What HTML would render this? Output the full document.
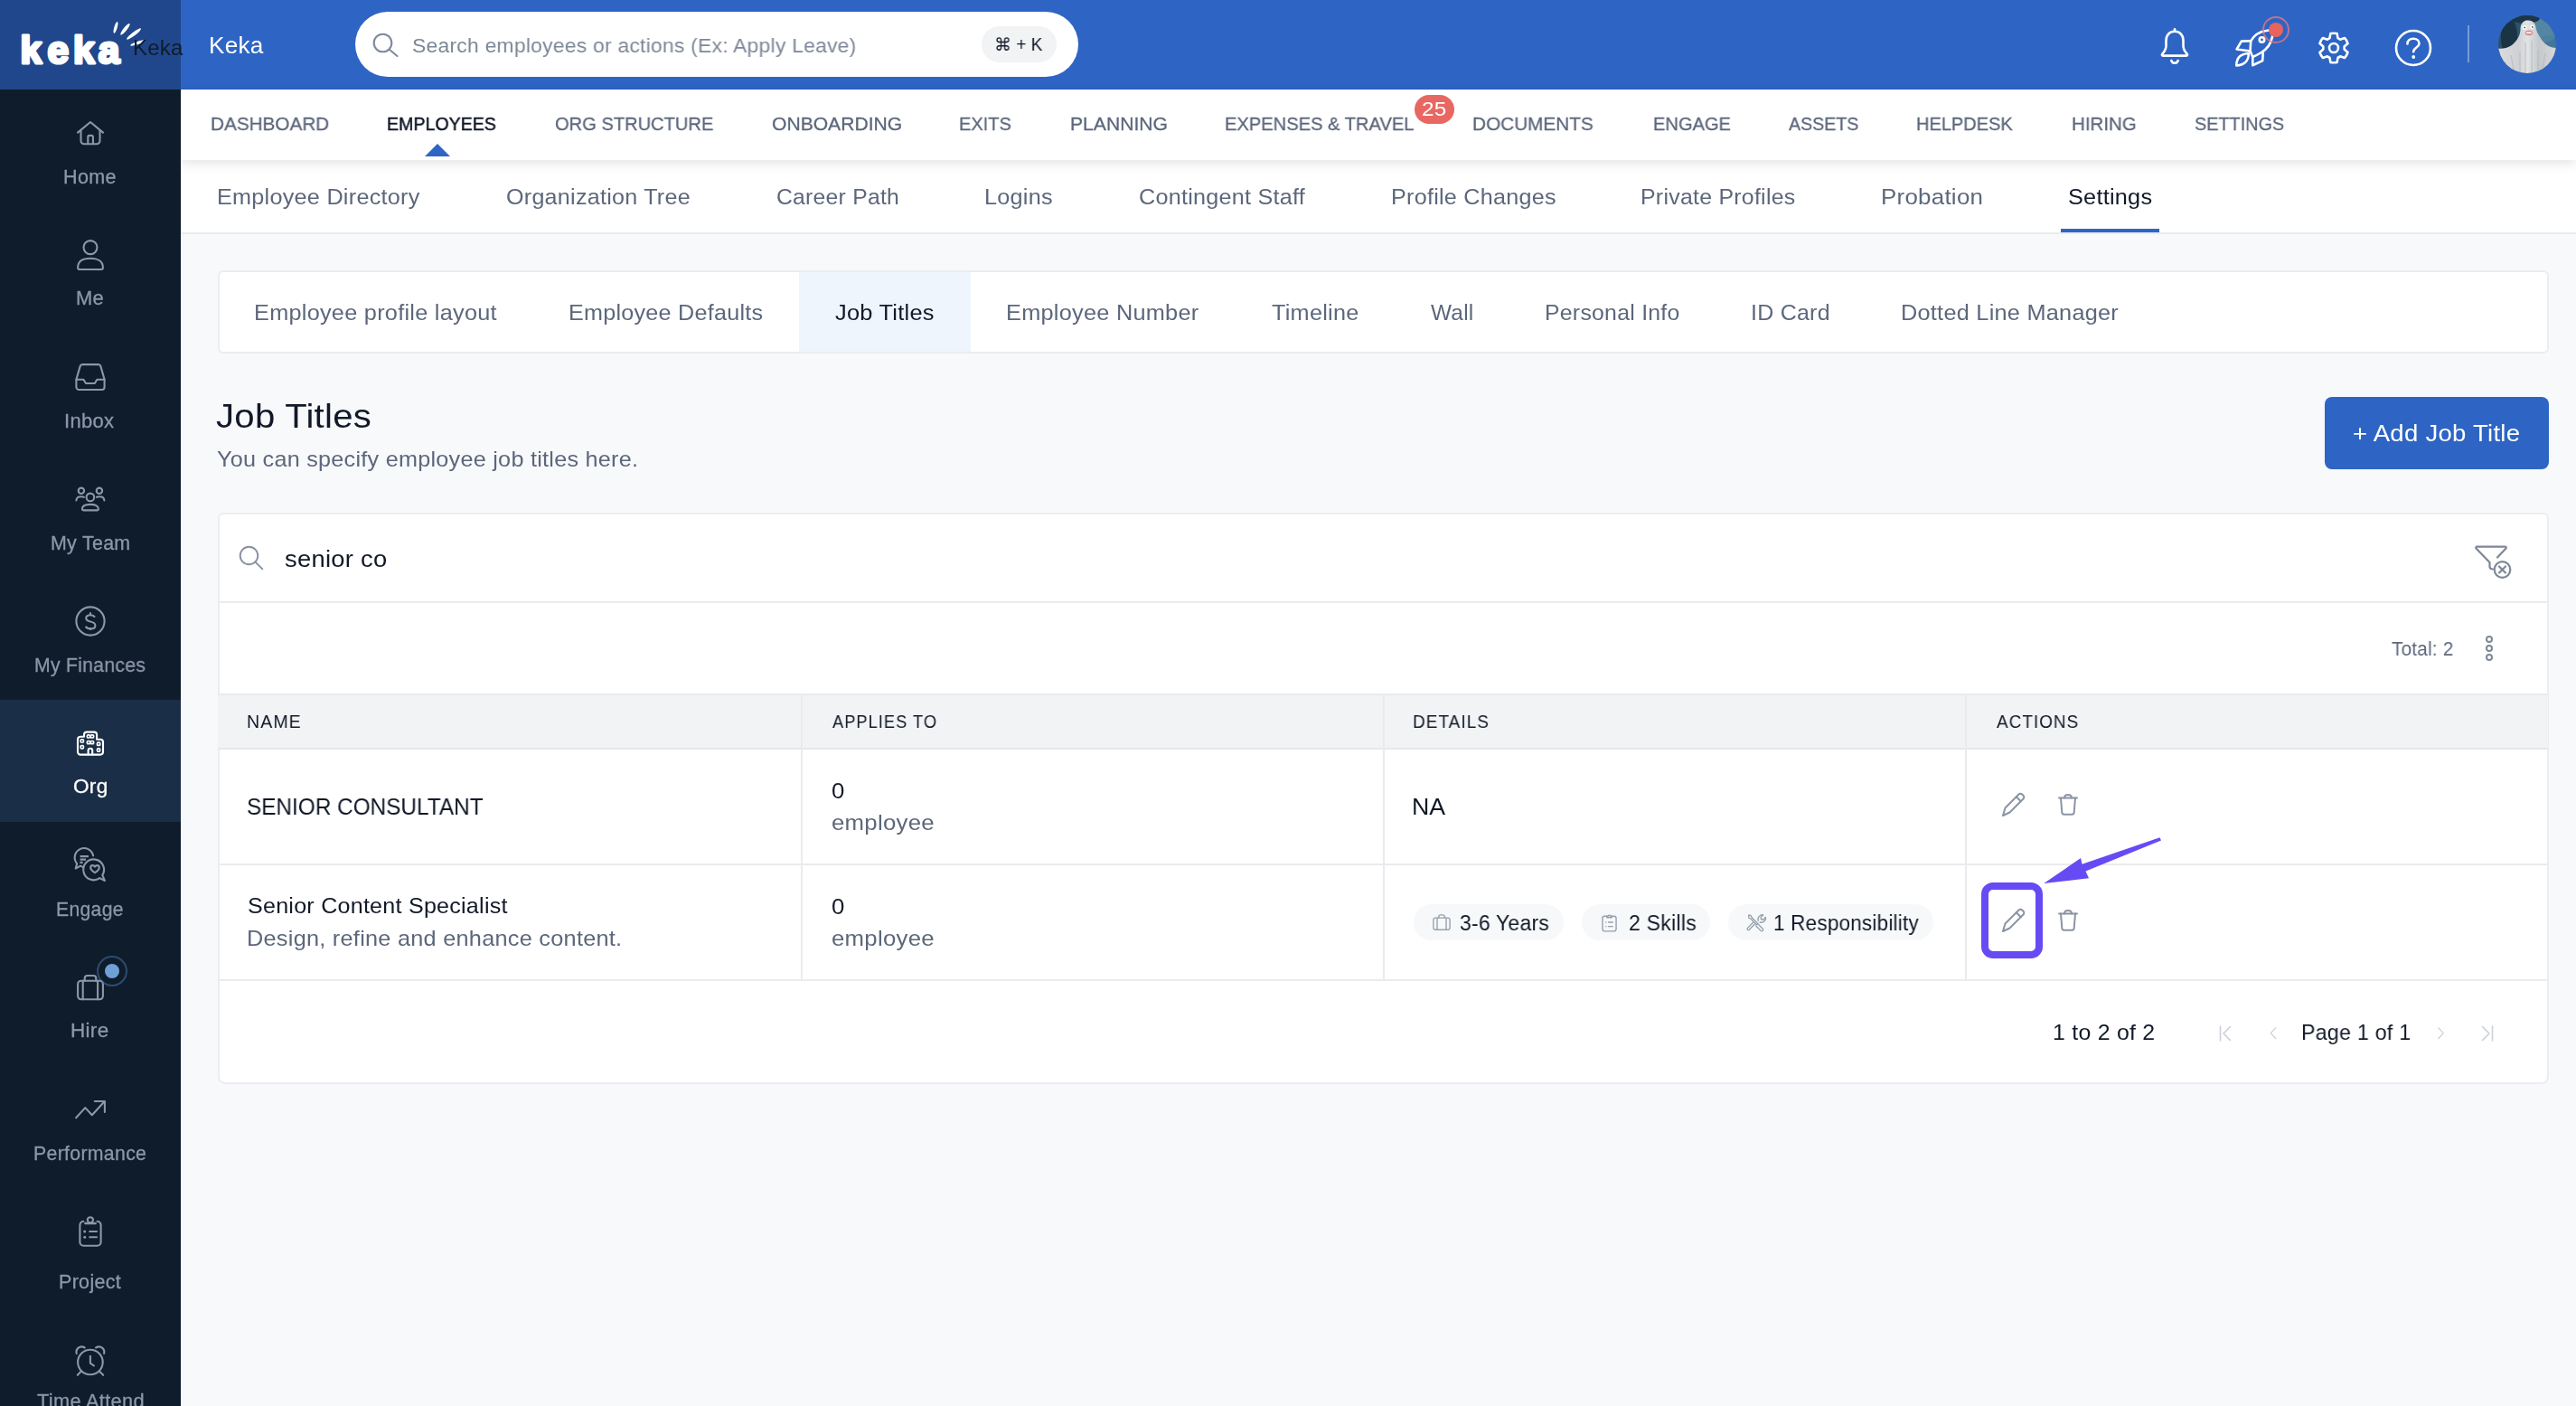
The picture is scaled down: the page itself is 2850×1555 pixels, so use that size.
<!DOCTYPE html>
<html lang="en"><head><meta charset="utf-8"><title>Keka - Job Titles</title>
<style>
*{box-sizing:border-box;margin:0;padding:0}
html,body{width:2850px;height:1555px;overflow:hidden}
body{position:relative;background:#f8f9fb;font-family:"Liberation Sans","DejaVu Sans",sans-serif;color:#111827;-webkit-font-smoothing:antialiased}
.t{will-change:transform;position:absolute;white-space:nowrap;line-height:1;display:block;transform-origin:0 50%}
a{text-decoration:none;color:inherit}
.abs{position:absolute}
svg{position:absolute;overflow:visible}
.sidebar{position:absolute;left:0;top:0;width:200px;height:1555px;background:#0f1c2b;z-index:3}
.logo{position:absolute;left:0;top:0;width:200px;height:99px;background:#20478b}
.side-item{position:absolute;left:0;width:200px;height:135px}
.side-item.active{background:#1a2e47}
.topbar{position:absolute;left:200px;top:0;width:2650px;height:99px;background:#2e65c4;border-bottom:1px solid #235fc4}
.search{position:absolute;left:193px;top:13px;width:800px;height:72px;border-radius:36px;background:#fff}
.kbd{position:absolute;left:693px;top:16px;width:83px;height:40px;border-radius:20px;background:#f2f3f5}
.mainnav{position:absolute;left:200px;top:99px;width:2650px;height:78px;background:#fff;box-shadow:0 3px 12px rgba(20,30,50,.13);z-index:2}
.subnav{position:absolute;left:200px;top:177px;width:2650px;height:82px;background:#fff;border-bottom:2px solid #e9ebee}
.card{position:absolute;background:#fff;border:2px solid #ebedf0;border-radius:6px}
.badge{position:absolute;border-radius:16px;background:#e86762}
.btn{position:absolute;left:2572px;top:439px;width:248px;height:80px;border-radius:8px;background:#2e65c4;border:0}
.thead{position:absolute;left:241px;top:767px;width:2578px;height:62px;background:#f2f3f5;border-top:2px solid #e9ebee;border-bottom:2px solid #e6e8ec}
.chip{position:absolute;height:40px;border-radius:20px;background:#f7f8fa}
.vline{position:absolute;width:2px;background:#e9ebee}
.hline{position:absolute;height:2px;background:#e9ebee}
.hl{position:absolute;left:2192px;top:976px;width:68px;height:84px;border:8px solid #664bf5;border-radius:13px}
</style></head><body>

<aside class="sidebar">
<div class="logo">
<svg width="200" height="99" viewBox="0 0 200 99" style="left:0;top:0"><text x="22.600" y="69.500" dx="0 6.200 4.900 4.200" font-family="Liberation Sans, sans-serif" font-weight="700" font-size="42.500" fill="#fff" stroke="#fff" stroke-width="3.200" stroke-linejoin="round">keka</text><g fill="#fff"><ellipse cx="128" cy="30.400" rx="6.600" ry="1.700" transform="rotate(-73.300 128 30.400)"/><ellipse cx="138.500" cy="32.300" rx="8" ry="1.900" transform="rotate(-51.300 138.500 32.300)"/><ellipse cx="148.100" cy="37.500" rx="9.800" ry="2" transform="rotate(-37.200 148.100 37.500)"/><ellipse cx="152.200" cy="47.500" rx="8.500" ry="1.700" transform="rotate(-19 152.200 47.500)"/></g></svg>
<span id="t1" class="t" style="left:147.0px;top:41.2px;font-size:24px;color:#0f1c2b;letter-spacing:0.25px;">Keka</span>
</div>
<a class="side-item" style="top:99px;color:#8d97a8">
<span class="abs" style="left:0;top:48.0px;width:200px;height:0"><svg width="32" height="28" viewBox="0 0 32 28" style="left:84px;top:-14px"><g stroke="currentColor" stroke-width="2.1" fill="none" stroke-linecap="round" stroke-linejoin="round"><path d="M2 13.600 L16 2 L30 13.600"/><path d="M5.500 11 V22.700 a3.500 3.500 0 0 0 3.500 3.500 H23 a3.500 3.500 0 0 0 3.500-3.500 V11"/><path d="M13.300 26.200 V18.400 a1.500 1.500 0 0 1 1.500-1.500 h2.600 a1.500 1.500 0 0 1 1.500 1.500 V26.200"/></g></svg></span>
<span id="t2" class="t" style="left:70.0px;top:85.5px;font-size:21.2px;color:#8d97a8;letter-spacing:0.30px;transform:scaleX(1.0179);-webkit-text-stroke:.3px #8d97a8;">Home</span>
</a>
<a class="side-item" style="top:234px;color:#8d97a8">
<span class="abs" style="left:0;top:48.0px;width:200px;height:0"><svg width="32" height="36" viewBox="0 0 32 36" style="left:84px;top:-18px"><g stroke="currentColor" stroke-width="2.1" fill="none" stroke-linecap="round" stroke-linejoin="round" stroke-width="2.3"><circle cx="16" cy="9.600" r="7.500"/><path d="M2.100 32 c0-6.500 5-10.300 13.900-10.300 s13.900 3.800 13.900 10.300 a2 2 0 0 1-2 2 H4.100 a2 2 0 0 1-2-2 z"/></g></svg></span>
<span id="t3" class="t" style="left:84.0px;top:85.1px;font-size:21.2px;color:#8d97a8;letter-spacing:0.30px;transform:scaleX(1.0357);-webkit-text-stroke:.3px #8d97a8;">Me</span>
</a>
<a class="side-item" style="top:369px;color:#8d97a8">
<span class="abs" style="left:0;top:47.0px;width:200px;height:0"><svg width="36" height="32" viewBox="0 0 36 32" style="left:82px;top:-15px"><g stroke="currentColor" stroke-width="2.1" fill="none" stroke-linecap="round" stroke-linejoin="round" stroke-width="2.2"><path d="M2.400 18.800 L6.700 3.900 a2.500 2.500 0 0 1 2.400-1.800 H26.900 a2.500 2.500 0 0 1 2.400 1.800 L33.600 18.800 V27 a3 3 0 0 1-3 3 H5.400 a3 3 0 0 1-3-3 z"/><path d="M2.400 18.800 H10.400 L13 23 H22.800 L25.400 18.800 H33.600"/></g></svg></span>
<span id="t4" class="t" style="left:71.0px;top:85.7px;font-size:21.2px;color:#8d97a8;letter-spacing:0.30px;transform:scaleX(1.0392);-webkit-text-stroke:.3px #8d97a8;">Inbox</span>
</a>
<a class="side-item" style="top:504px;color:#8d97a8">
<span class="abs" style="left:0;top:47.6px;width:200px;height:0"><svg width="36" height="28" viewBox="0 0 36 28" style="left:82px;top:-13.600px"><g stroke="currentColor" stroke-width="2.1" fill="none" stroke-linecap="round" stroke-linejoin="round" stroke-width="2"><circle cx="17.900" cy="11.900" r="4.300"/><path d="M8.900 25 c0-3.200 3.500-5.100 9-5.100 s9 1.900 9 5.100 a1.400 1.400 0 0 1-1.400 1.400 H10.300 a1.400 1.400 0 0 1-1.400-1.400 z"/><circle cx="7.900" cy="4.800" r="3.200"/><path d="M2.400 15.500 c.2-2.800 2.300-4.300 5.200-4.300 c1.200 0 2.300 .2 3.200 .6"/><circle cx="27.900" cy="4.800" r="3.200"/><path d="M33.400 15.500 c-.2-2.800-2.300-4.300-5.200-4.300 c-1.200 0-2.300 .2-3.200 .6"/></g></svg></span>
<span id="t5" class="t" style="left:56.0px;top:85.6px;font-size:21.2px;color:#8d97a8;letter-spacing:0.30px;transform:scaleX(1.0094);-webkit-text-stroke:.3px #8d97a8;">My Team</span>
</a>
<a class="side-item" style="top:639px;color:#8d97a8">
<span class="abs" style="left:0;top:47.5px;width:200px;height:0"><svg width="34" height="34" viewBox="0 0 34 34" style="left:83px;top:-16.600px"><g stroke="currentColor" stroke-width="2.1" fill="none" stroke-linecap="round" stroke-linejoin="round" stroke-width="2"><circle cx="17" cy="17" r="15.600"/><path d="M22 12.600 c-1-1.600-2.800-2.400-5-2.400 c-2.800 0-4.800 1.400-4.800 3.600 c0 2.200 1.800 3 4.900 3.700 c3.300 .8 5.300 1.700 5.300 4.200 c0 2.400-2.200 3.800-5.200 3.800 c-2.500 0-4.500-.9-5.500-2.700 M17 7.300 V10 M17 24 V26.900" stroke-linecap="butt"/></g></svg></span>
<span id="t6" class="t" style="left:38.0px;top:86.0px;font-size:21.2px;color:#8d97a8;letter-spacing:0.30px;transform:scaleX(0.9980);-webkit-text-stroke:.3px #8d97a8;">My Finances</span>
</a>
<a class="side-item active" style="top:774px;color:#fff">
<span class="abs" style="left:0;top:47.8px;width:200px;height:0"><svg width="32" height="28" viewBox="0 0 32 28" style="left:84px;top:-14px"><g stroke="currentColor" stroke-width="2.1" fill="none" stroke-linecap="round" stroke-linejoin="round" stroke-width="2"><path d="M2 23.600 V9.700 a3 3 0 0 1 3-3 H9 V4.600 a3 3 0 0 1 3-3 H20.100 a3 3 0 0 1 3 3 V9.700 H27 a3 3 0 0 1 3 3 V23.600 a3 3 0 0 1-3 3 H5 a3 3 0 0 1-3-3 z"/><path d="M13.600 26.600 V22 a2.300 2.300 0 0 1 4.600 0 V26.600"/><g stroke-width="1.700"><rect x="12.400" y="4.800" width="3.200" height="3.200" rx="1"/><rect x="16.400" y="4.800" width="3.200" height="3.200" rx="1"/><rect x="12.400" y="11.500" width="3.200" height="3.200" rx="1"/><rect x="16.400" y="11.500" width="3.200" height="3.200" rx="1"/><rect x="5.200" y="9.800" width="3.200" height="3.200" rx="1"/><rect x="5.200" y="16.600" width="3.200" height="3.200" rx="1"/><rect x="23.500" y="13.200" width="3.200" height="3.200" rx="1"/><rect x="23.500" y="19.900" width="3.200" height="3.200" rx="1"/></g></g></svg></span>
<span id="t7" class="t" style="left:81.0px;top:85.4px;font-size:21.2px;color:#fff;letter-spacing:0.30px;transform:scaleX(1.0652);-webkit-text-stroke:.3px #fff;">Org</span>
</a>
<a class="side-item" style="top:909px;color:#8d97a8">
<span class="abs" style="left:0;top:47.8px;width:200px;height:0"><svg width="36" height="36" viewBox="0 0 36 36" style="left:82px;top:-18px"><g stroke="currentColor" stroke-width="2.1" fill="none" stroke-linecap="round" stroke-linejoin="round" stroke-width="1.900"><path d="M21.100 7.400 A10.300 10.300 0 1 0 3.200 16.100 L1.700 21.600 L7 18.600 L9.600 19.900"/><path d="M6.600 8.200 H16 M6.600 11.600 H13 M6.400 14.800 H9.600" stroke-width="2.200" stroke-linecap="butt"/><path d="M31.300 28.900 L33.900 35 L28.300 32.100 A11.400 11.400 0 1 1 31.300 28.900 z"/><path d="M23 26.200 c-3.200-2-4.800-3.800-4.800-5.700 c0-1.400 1.100-2.400 2.400-2.400 c1 0 1.900 .6 2.400 1.500 c.5-.9 1.400-1.500 2.400-1.500 c1.300 0 2.400 1 2.400 2.400 c0 1.900-1.600 3.700-4.800 5.700 z"/></g></svg></span>
<span id="t8" class="t" style="left:62.0px;top:85.8px;font-size:21.2px;color:#8d97a8;letter-spacing:0.30px;transform:scaleX(0.9989);-webkit-text-stroke:.3px #8d97a8;">Engage</span>
</a>
<a class="side-item" style="top:1044px;color:#8d97a8">
<span class="abs" style="left:0;top:47.0px;width:200px;height:0"><svg width="32" height="30" viewBox="0 0 32 30" style="left:84px;top:-13px"><g stroke="currentColor" stroke-width="2.1" fill="none" stroke-linecap="round" stroke-linejoin="round" stroke-width="2.200"><rect x="2.100" y="6.800" width="27.800" height="20.400" rx="3.600"/><path d="M9.700 6.800 V4 a3 3 0 0 1 3-3 h6.600 a3 3 0 0 1 3 3 V6.800"/><path d="M7.700 6.800 V27.200 M24.100 6.800 V27.200"/></g></svg></span>
<span id="t9" class="t" style="left:78.0px;top:84.9px;font-size:21.2px;color:#8d97a8;letter-spacing:0.30px;transform:scaleX(1.0613);-webkit-text-stroke:.3px #8d97a8;">Hire</span>
<span class="abs" style="left:106.700px;top:12.7px;width:34.600px;height:34.600px;border-radius:50%;border:2.200px solid rgba(78,124,180,.5)"></span>
<span class="abs" style="left:115.900px;top:21.9px;width:16.200px;height:16.200px;border-radius:50%;background:#6ea0d6"></span>
</a>
<a class="side-item" style="top:1179px;color:#8d97a8">
<span class="abs" style="left:0;top:47.0px;width:200px;height:0"><svg width="36" height="24" viewBox="0 0 36 24" style="left:82px;top:-11px"><g stroke="currentColor" stroke-width="2.1" fill="none" stroke-linecap="round" stroke-linejoin="round" stroke-width="2.200" stroke-linecap="butt" stroke-linejoin="miter"><path d="M2.100 21.200 L12.300 10.100 L19.800 18.200 L33.600 3.300"/><path d="M22.800 3 H33.900 V15"/></g></svg></span>
<span id="t10" class="t" style="left:37.0px;top:85.9px;font-size:21.2px;color:#8d97a8;letter-spacing:0.30px;transform:scaleX(1.0051);-webkit-text-stroke:.3px #8d97a8;">Performance</span>
</a>
<a class="side-item" style="top:1320px;color:#8d97a8">
<span class="abs" style="left:0;top:42.0px;width:200px;height:0"><svg width="28" height="36" viewBox="0 0 28 36" style="left:86px;top:-18px"><g stroke="currentColor" stroke-width="2.1" fill="none" stroke-linecap="round" stroke-linejoin="round" stroke-width="2.200"><path d="M6.400 6.800 A4.500 4.500 0 0 0 2.400 11.200 V29.700 a4 4 0 0 0 4 4 H21.600 a4 4 0 0 0 4-4 V11.200 A4.500 4.500 0 0 0 21.600 6.800"/><circle cx="13.900" cy="5.300" r="3.100"/><path d="M8.300 9 H19.700" stroke-width="2.400"/><path d="M12.400 18 H21.800 M12.400 24.300 H21.800" stroke-linecap="butt"/></g><circle cx="7.700" cy="18" r="1.500" fill="currentColor"/><circle cx="7.700" cy="24.300" r="1.500" fill="currentColor"/></svg></span>
<span id="t11" class="t" style="left:65.0px;top:87.4px;font-size:21.2px;color:#8d97a8;letter-spacing:0.30px;transform:scaleX(1.0149);-webkit-text-stroke:.3px #8d97a8;">Project</span>
</a>
<a class="side-item" style="top:1459px;color:#8d97a8">
<span class="abs" style="left:0;top:45.4px;width:200px;height:0"><svg width="36" height="36" viewBox="0 0 36 36" style="left:82px;top:-18px"><g stroke="currentColor" stroke-width="2.1" fill="none" stroke-linecap="round" stroke-linejoin="round" stroke-width="2"><circle cx="17.900" cy="20.500" r="13.800"/><path d="M17.900 13 V21.600 L22.600 25" stroke-linecap="butt"/><path d="M2.700 11.100 C1.400 6.100 6.500 1.100 11.700 4.500"/><path d="M33.100 11.100 C34.400 6.100 29.300 1.100 24.100 4.500"/><path d="M7.900 30.500 L3.800 34.800 M27.900 30.500 L32.200 34.800"/></g></svg></span>
<span id="t12" class="t" style="left:41.0px;top:79.7px;font-size:21.2px;color:#8d97a8;letter-spacing:0.30px;transform:scaleX(1.0281);-webkit-text-stroke:.3px #8d97a8;">Time Attend</span>
</a>
</aside>
<header class="topbar">
<span id="t13" class="t" style="left:31.0px;top:36.6px;font-size:26px;color:#fff;letter-spacing:0.25px;transform:scaleX(1.0039);">Keka</span>
<div class="search">
<svg width="30" height="28" viewBox="0 0 30 28" style="left:19px;top:23px"><g stroke="#7f8a9a" stroke-width="2.100" fill="none" stroke-linecap="round"><circle cx="11.500" cy="11.500" r="9.800"/><path d="M18.800 18.800 L27.500 26"/></g></svg>
<span id="t14" class="t" style="left:63.0px;top:26.0px;font-size:22.9px;color:#7c8797;letter-spacing:0.25px;transform:scaleX(0.9986);">Search employees or actions (Ex: Apply Leave)</span>
<div class="kbd">
<span id="t15" class="t" style="left:14.0px;top:10.8px;font-size:19.5px;color:#111827;transform:scaleX(0.9735);">⌘ + K</span>
</div></div>
<svg width="36" height="44" viewBox="0 0 36 44" style="left:2188px;top:29px"><g stroke="#fff" stroke-width="2.600" fill="none" stroke-linecap="round" stroke-linejoin="round"><path d="M18 5.800 c-5.800 0-9.500 4.300-9.500 10 v5.800 c0 3.800-1.800 6.600-4.300 9.300 c-.6.700-.2 1.700 .8 1.700 H31 c1 0 1.400-1 .8-1.700 c-2.500-2.700-4.300-5.500-4.300-9.300 v-5.800 c0-5.700-3.700-10-9.500-10 z"/><path d="M14.300 38 c.7 1.900 2 2.800 3.700 2.800 s3-.9 3.700-2.800"/><path d="M18 3.300 V5"/></g></svg>
<svg width="46" height="46" viewBox="0 0 46 46" style="left:2271px;top:30px"><g stroke="#fff" stroke-width="2.600" fill="none" stroke-linecap="round" stroke-linejoin="round"><path d="M19.200 15.300 C23 9 29.500 4.900 36 4 c2.800-.6 5.400-.8 7.700-.7 c.1 2.300-.1 5-.8 7.800 C41.500 17.500 37.500 24 31 28 c-3 1.800-6.300 3.500-9.700 5 L18.600 26.500 z"/><circle cx="31.500" cy="14" r="2.700"/><path d="M19.200 15.300 L8.800 15.600 L3.600 24.500 L18.600 26.500"/><path d="M21.300 33 L21.300 42.200 L32.200 37.100 L32.800 27"/><path d="M3.300 42.500 C3.300 36 6 29.500 16.800 29 C17 38 11 42 3.300 42.500 z"/></g></svg>
<span class="abs" style="left:2303px;top:18px;width:30px;height:30px;border-radius:50%;border:2px solid rgba(232,120,130,.75)"></span>
<span class="abs" style="left:2310px;top:25px;width:16px;height:16px;border-radius:50%;background:#e8635f"></span>
<svg width="38" height="38" viewBox="0 0 38 38" style="left:2363px;top:33.800px"><g stroke="#fff" stroke-width="2.600" fill="none" stroke-linecap="round" stroke-linejoin="round"><circle cx="19" cy="19" r="5"/><path d="M14.43 8.23 L15.47 3.09 A16.3 16.3 0 0 1 22.53 3.09 L23.57 8.23 A11.7 11.7 0 0 1 26.04 9.66 L31.02 7.99 A16.3 16.3 0 0 1 34.55 14.10 L30.61 17.57 A11.7 11.7 0 0 1 30.61 20.43 L34.55 23.90 A16.3 16.3 0 0 1 31.02 30.01 L26.04 28.34 A11.7 11.7 0 0 1 23.57 29.77 L22.53 34.91 A16.3 16.3 0 0 1 15.47 34.91 L14.43 29.77 A11.7 11.7 0 0 1 11.96 28.34 L6.98 30.01 A16.3 16.3 0 0 1 3.45 23.90 L7.39 20.43 A11.7 11.7 0 0 1 7.39 17.57 L3.45 14.10 A16.3 16.3 0 0 1 6.98 7.99 L11.96 9.66 A11.7 11.7 0 0 1 14.43 8.23 z"/></g></svg>
<svg width="42" height="42" viewBox="0 0 42 42" style="left:2449px;top:32px"><g stroke="#fff" stroke-width="2.600" fill="none" stroke-linecap="round" stroke-linejoin="round"><circle cx="21" cy="21" r="19"/><path d="M14.500 16.500 c0-3.500 2.800-5.800 6.500-5.800 s6.500 2.200 6.500 5.500 c0 4.300-6.300 4.300-6.300 9"/></g><circle cx="21.200" cy="31" r="1.900" fill="#fff"/></svg>
<span class="abs" style="left:2530px;top:28px;width:2px;height:41px;background:rgba(255,255,255,.35)"></span>
<svg width="64" height="64" viewBox="0 0 64 64" style="left:2564px;top:17px"><defs><clipPath id="avc"><circle cx="32" cy="32" r="32"/></clipPath><linearGradient id="avg" x1="0" y1="0" x2="1" y2="0"><stop offset="0" stop-color="#d9dbdd"/><stop offset=".35" stop-color="#cfd1d4"/><stop offset=".5" stop-color="#e1e3e5"/><stop offset=".7" stop-color="#c6c9cc"/><stop offset="1" stop-color="#d6d8da"/></linearGradient></defs><g clip-path="url(#avc)"><rect width="64" height="64" fill="#2b516b"/><ellipse cx="50" cy="16" rx="16" ry="14" fill="#5f93b3" opacity=".8"/><ellipse cx="56" cy="30" rx="10" ry="8" fill="#4b7fa0" opacity=".8"/><ellipse cx="12" cy="24" rx="9" ry="22" fill="#1a3444"/><ellipse cx="30" cy="3" rx="16" ry="6" fill="#1c3646"/><path d="M33 5.500 C27 5.500 24.500 10 24.500 15 C24.500 22 21 28 15 33 C9 37 3 37 0 36.500 V64 H64 V35.800 C58 36 52 33 48 27 C44 21 42 17 41.500 13 C41 8.500 38 5.500 33 5.500 z" fill="url(#avg)"/><path d="M24 40 V64 M30 30 V64 M37 28 V64 M44 38 V64 M14 44 L18 64 M52 42 L48 64" stroke="#b4b7bb" stroke-width="1.200" opacity=".7" fill="none"/><circle cx="28.900" cy="13.400" r="2.300" fill="#fff"/><circle cx="37.500" cy="12.700" r="2.300" fill="#fff"/><circle cx="29.200" cy="13.600" r=".8" fill="#222"/><circle cx="37.800" cy="12.900" r=".8" fill="#222"/><ellipse cx="33.900" cy="19.400" rx="4.200" ry="2.800" fill="#d98c8c"/><rect x="31" y="18.400" width="5.800" height="1.600" rx=".6" fill="#fff"/></g></svg>
</header>
<nav class="mainnav">
<a id="t16" class="t" style="left:33.0px;top:26.5px;font-size:21px;color:#5c677b;transform:scaleX(0.9864);-webkit-text-stroke:.3px #5c677b;">DASHBOARD</a>
<a id="t17" class="t" style="left:228.0px;top:26.5px;font-size:21px;color:#111827;transform:scaleX(0.9330);-webkit-text-stroke:.5px #111827;">EMPLOYEES</a>
<a id="t18" class="t" style="left:414.0px;top:26.5px;font-size:21px;color:#5c677b;transform:scaleX(0.9571);-webkit-text-stroke:.3px #5c677b;">ORG STRUCTURE</a>
<a id="t19" class="t" style="left:654.0px;top:26.5px;font-size:21px;color:#5c677b;transform:scaleX(1.0042);-webkit-text-stroke:.3px #5c677b;">ONBOARDING</a>
<a id="t20" class="t" style="left:861.0px;top:26.5px;font-size:21px;color:#5c677b;transform:scaleX(0.9528);-webkit-text-stroke:.3px #5c677b;">EXITS</a>
<a id="t21" class="t" style="left:984.0px;top:26.5px;font-size:21px;color:#5c677b;transform:scaleX(1.0052);-webkit-text-stroke:.3px #5c677b;">PLANNING</a>
<a id="t22" class="t" style="left:1155.0px;top:26.5px;font-size:21px;color:#5c677b;transform:scaleX(0.9580);-webkit-text-stroke:.3px #5c677b;">EXPENSES &amp; TRAVEL</a>
<a id="t23" class="t" style="left:1429.0px;top:26.5px;font-size:21px;color:#5c677b;transform:scaleX(0.9888);-webkit-text-stroke:.3px #5c677b;">DOCUMENTS</a>
<a id="t24" class="t" style="left:1629.0px;top:26.5px;font-size:21px;color:#5c677b;transform:scaleX(0.9567);-webkit-text-stroke:.3px #5c677b;">ENGAGE</a>
<a id="t25" class="t" style="left:1779.0px;top:26.5px;font-size:21px;color:#5c677b;transform:scaleX(0.9343);-webkit-text-stroke:.3px #5c677b;">ASSETS</a>
<a id="t26" class="t" style="left:1920.0px;top:26.5px;font-size:21px;color:#5c677b;transform:scaleX(0.9531);-webkit-text-stroke:.3px #5c677b;">HELPDESK</a>
<a id="t27" class="t" style="left:2092.0px;top:26.5px;font-size:21px;color:#5c677b;transform:scaleX(0.9748);-webkit-text-stroke:.3px #5c677b;">HIRING</a>
<a id="t28" class="t" style="left:2228.0px;top:26.5px;font-size:21px;color:#5c677b;transform:scaleX(0.9440);-webkit-text-stroke:.3px #5c677b;">SETTINGS</a>
<svg width="28" height="14" viewBox="0 0 28 14" style="left:270px;top:60px"><path d="M0 14 L14 0 L28 14 z" fill="#2e65c4"/></svg>
<span class="badge" style="left:1365px;top:6px;width:44px;height:32px"></span>
<span id="t29" class="t" style="left:1373.0px;top:11.9px;font-size:21.5px;color:#fff;letter-spacing:0.25px;transform:scaleX(1.1289);">25</span>
</nav>
<nav class="subnav">
<a id="t30" class="t" style="left:40.0px;top:28.6px;font-size:24.2px;color:#5c677b;letter-spacing:0.25px;transform:scaleX(1.0419);">Employee Directory</a>
<a id="t31" class="t" style="left:360.0px;top:28.6px;font-size:24.2px;color:#5c677b;letter-spacing:0.25px;transform:scaleX(1.0375);">Organization Tree</a>
<a id="t32" class="t" style="left:659.0px;top:28.6px;font-size:24.2px;color:#5c677b;letter-spacing:0.25px;transform:scaleX(1.0214);">Career Path</a>
<a id="t33" class="t" style="left:889.0px;top:28.6px;font-size:24.2px;color:#5c677b;letter-spacing:0.25px;transform:scaleX(1.0425);">Logins</a>
<a id="t34" class="t" style="left:1060.0px;top:28.6px;font-size:24.2px;color:#5c677b;letter-spacing:0.25px;transform:scaleX(1.0398);">Contingent Staff</a>
<a id="t35" class="t" style="left:1339.0px;top:28.6px;font-size:24.2px;color:#5c677b;letter-spacing:0.25px;transform:scaleX(1.0392);">Profile Changes</a>
<a id="t36" class="t" style="left:1615.0px;top:28.6px;font-size:24.2px;color:#5c677b;letter-spacing:0.25px;transform:scaleX(1.0291);">Private Profiles</a>
<a id="t37" class="t" style="left:1881.0px;top:28.6px;font-size:24.2px;color:#5c677b;letter-spacing:0.25px;transform:scaleX(1.0702);">Probation</a>
<a id="t38" class="t" style="left:2088.0px;top:28.6px;font-size:24.2px;color:#111827;letter-spacing:0.25px;transform:scaleX(1.0436);">Settings</a>
<span class="abs" style="left:2080px;top:76px;width:109px;height:4px;background:#2e65c4"></span>
</nav>
<main>
<div class="card" style="left:241px;top:299px;width:2579px;height:92px">
<span class="abs" style="left:641px;top:0;width:190px;height:88px;background:#eef5fd"></span>
<a id="t39" class="t" style="left:38.0px;top:33.0px;font-size:24.2px;color:#5c677b;letter-spacing:0.25px;transform:scaleX(1.0453);">Employee profile layout</a>
<a id="t40" class="t" style="left:386.0px;top:33.0px;font-size:24.2px;color:#5c677b;letter-spacing:0.25px;transform:scaleX(1.0389);">Employee Defaults</a>
<a id="t41" class="t" style="left:681.0px;top:33.0px;font-size:24.2px;color:#111827;letter-spacing:0.25px;transform:scaleX(1.0484);">Job Titles</a>
<a id="t42" class="t" style="left:870.0px;top:33.0px;font-size:24.2px;color:#5c677b;letter-spacing:0.25px;transform:scaleX(1.0462);">Employee Number</a>
<a id="t43" class="t" style="left:1164.0px;top:33.0px;font-size:24.2px;color:#5c677b;letter-spacing:0.25px;transform:scaleX(1.0436);">Timeline</a>
<a id="t44" class="t" style="left:1340.0px;top:33.0px;font-size:24.2px;color:#5c677b;letter-spacing:0.25px;transform:scaleX(1.0071);">Wall</a>
<a id="t45" class="t" style="left:1466.0px;top:33.0px;font-size:24.2px;color:#5c677b;letter-spacing:0.25px;transform:scaleX(1.0259);">Personal Info</a>
<a id="t46" class="t" style="left:1694.0px;top:33.0px;font-size:24.2px;color:#5c677b;letter-spacing:0.25px;transform:scaleX(1.0320);">ID Card</a>
<a id="t47" class="t" style="left:1860.0px;top:33.0px;font-size:24.2px;color:#5c677b;letter-spacing:0.25px;transform:scaleX(1.0451);">Dotted Line Manager</a>
</div>
<h1 id="t48" class="t" style="left:239.0px;top:441.9px;font-size:37.5px;color:#111827;letter-spacing:0.25px;transform:scaleX(1.0696);font-weight:400;">Job Titles</h1>
<p id="t49" class="t" style="left:240.0px;top:496.2px;font-size:23.8px;color:#5c677b;letter-spacing:0.25px;transform:scaleX(1.0582);">You can specify employee job titles here.</p>
<button class="btn">
<span id="t50" class="t" style="left:31.4px;top:28.3px;font-size:25.9px;color:#fff;letter-spacing:0.25px;transform:scaleX(1.0630);">+ Add Job Title</span>
</button>
<section class="card" style="left:241px;top:567px;width:2579px;height:202px;border-radius:6px">
<svg width="30" height="30" viewBox="0 0 30 30" style="left:21px;top:34px"><g stroke="#8791a0" stroke-width="1.900" fill="none" stroke-linecap="round"><circle cx="11.500" cy="11.500" r="9.800"/><path d="M18.600 18.600 L26.300 26.300"/></g></svg>
<span id="t51" class="t" style="left:72.2px;top:37.4px;font-size:25.3px;color:#111827;letter-spacing:0.25px;transform:scaleX(1.0806);">senior co</span>
<span class="hline" style="left:0;top:96px;width:2575px"></span>
<svg width="42" height="38" viewBox="0 0 42 38" style="left:2494px;top:34px"><g stroke="#7d8796" stroke-width="2.200" fill="none" stroke-linecap="round" stroke-linejoin="round"><path d="M21 26.500 c-2.500 0-3.500-1-3.500-3 V19 L2.500 3.500 c-.6-.7-.2-1.800 .8-1.800 H34.700 c1 0 1.400 1.100 .8 1.800 L26 13.500"/><circle cx="31.500" cy="27" r="8.800"/><path d="M28 23.500 l7 7 M35 23.500 l-7 7"/></g></svg>
<span id="t52" class="t" style="left:2403.0px;top:138.0px;font-size:21.8px;color:#5c677b;letter-spacing:0.25px;transform:scaleX(0.9481);">Total: 2</span>
<svg width="10" height="28" viewBox="0 0 10 28" style="left:2506px;top:134px"><g stroke="#7d8796" stroke-width="2" fill="none"><circle cx="5" cy="4" r="3"/><circle cx="5" cy="14" r="3"/><circle cx="5" cy="24" r="3"/></g></svg>
</section>
<section class="card" style="left:241px;top:765px;width:2579px;height:434px;border-radius:0 0 8px 8px;border-top:0">
</section>
<div class="thead"></div>
<span class="vline" style="left:886px;top:769px;height:315px"></span>
<span class="vline" style="left:1530px;top:769px;height:315px"></span>
<span class="vline" style="left:2174px;top:769px;height:315px"></span>
<span class="hline" style="left:243px;top:955px;width:2575px"></span>
<span class="hline" style="left:243px;top:1083px;width:2575px"></span>
<span id="t53" class="t" style="left:273.0px;top:788.6px;font-size:19.6px;color:#111827;letter-spacing:1.10px;transform:scaleX(0.9967);">NAME</span>
<span id="t54" class="t" style="left:921.0px;top:788.6px;font-size:19.6px;color:#111827;letter-spacing:1.10px;transform:scaleX(0.9319);">APPLIES TO</span>
<span id="t55" class="t" style="left:1563.0px;top:788.6px;font-size:19.6px;color:#111827;letter-spacing:1.10px;transform:scaleX(0.9667);">DETAILS</span>
<span id="t56" class="t" style="left:2209.0px;top:788.6px;font-size:19.6px;color:#111827;letter-spacing:1.10px;transform:scaleX(0.9635);">ACTIONS</span>
<span id="t57" class="t" style="left:273.0px;top:880.0px;font-size:25.2px;color:#111827;transform:scaleX(0.9666);">SENIOR CONSULTANT</span>
<span id="t58" class="t" style="left:920.0px;top:863.7px;font-size:23px;color:#111827;transform:scaleX(1.12);">0</span>
<span id="t59" class="t" style="left:920.0px;top:899.2px;font-size:23.6px;color:#5c677b;letter-spacing:0.25px;transform:scaleX(1.0915);">employee</span>
<span id="t60" class="t" style="left:1562.0px;top:880.0px;font-size:25.2px;color:#111827;transform:scaleX(1.0606);">NA</span>
<span id="t61" class="t" style="left:274.0px;top:990.0px;font-size:24.8px;color:#111827;letter-spacing:0.25px;transform:scaleX(1.0106);">Senior Content Specialist</span>
<span id="t62" class="t" style="left:273.0px;top:1027.2px;font-size:23.6px;color:#5c677b;letter-spacing:0.25px;transform:scaleX(1.0711);">Design, refine and enhance content.</span>
<span id="t63" class="t" style="left:920.0px;top:991.7px;font-size:23px;color:#111827;transform:scaleX(1.12);">0</span>
<span id="t64" class="t" style="left:920.0px;top:1027.2px;font-size:23.6px;color:#5c677b;letter-spacing:0.25px;transform:scaleX(1.0915);">employee</span>
<span class="chip" style="left:1564px;top:1000px;width:166px"></span>
<span class="chip" style="left:1750px;top:1000px;width:142px"></span>
<span class="chip" style="left:1912px;top:1000px;width:227px"></span>
<svg width="20" height="18.200" viewBox="0 0 22 20" style="left:1584.500px;top:1011px"><g stroke="#97a0ae" stroke-width="1.500" fill="none" stroke-linecap="round" stroke-linejoin="round"><rect x="1" y="4.500" width="20" height="14.500" rx="2.500"/><path d="M7.500 4.500 V3 a2 2 0 0 1 2-2 h3 a2 2 0 0 1 2 2 V4.500 M5.500 4.500 V19 M16.500 4.500 V19"/></g></svg>
<span id="t65" class="t" style="left:1615.0px;top:1009.9px;font-size:23.5px;color:#111827;letter-spacing:0.25px;transform:scaleX(0.9751);">3-6 Years</span>
<svg width="17" height="20.800" viewBox="0 0 18 22" style="left:1772px;top:1009.500px"><g stroke="#97a0ae" stroke-width="1.500" fill="none" stroke-linecap="round" stroke-linejoin="round"><path d="M6 3.500 H3.500 a2.500 2.500 0 0 0-2.500 2.500 V18.500 a2.500 2.500 0 0 0 2.500 2.500 H14.500 a2.500 2.500 0 0 0 2.500-2.500 V6 a2.500 2.500 0 0 0-2.500-2.500 H12"/><path d="M6 5 V3.500 h1.500 a1.600 1.600 0 0 1 3 0 H12 V5 z"/><path d="M8 10.500 H13 M8 15.500 H13 M5 10.500 h.1 M5 15.500 h.1"/></g></svg>
<span id="t66" class="t" style="left:1802.0px;top:1009.9px;font-size:23.5px;color:#111827;letter-spacing:0.25px;transform:scaleX(0.9801);">2 Skills</span>
<svg width="20" height="20" viewBox="0 0 22 22" style="left:1933px;top:1010px"><g stroke="#97a0ae" stroke-width="1.500" fill="none" stroke-linecap="round" stroke-linejoin="round"><path d="M2 2 l2.500 .8 l1.200 2.500 L13 12.500 l-1.500 1.500 L4.200 6.600 L1.800 5.500 z"/><path d="M13 13 l6 6 a1.600 1.600 0 0 1-2.300 2.300 l-6-6"/><path d="M9 13.500 L2.500 20 a1.300 1.300 0 0 1-2-2 L7 11.500"/><path d="M13.500 9 c-.8-2.500 .3-5 2.300-6.300 c1.200-.8 2.500-.9 3.700-.6 l-3 3 l.6 2.300 l2.300 .6 l3-3 c.3 1.200 .1 2.600-.6 3.700 c-1.300 2-3.800 3-6.300 2.300"/></g></svg>
<span id="t67" class="t" style="left:1962.0px;top:1009.9px;font-size:23.5px;color:#111827;letter-spacing:0.25px;transform:scaleX(0.9548);">1 Responsibility</span>
<svg width="28" height="28" viewBox="0 0 28 28" style="left:2214px;top:876px"><g stroke="#8a94a3" stroke-width="2" fill="none" stroke-linecap="round" stroke-linejoin="round"><path d="M2 26 L4.500 17.500 L19.500 2.500 a2.600 2.600 0 0 1 3.700 0 l1.300 1.300 a2.600 2.600 0 0 1 0 3.700 L9.500 22.500 z"/><path d="M16.800 5.200 L21.800 10.200"/></g></svg>
<svg width="22" height="24" viewBox="0 0 22 24" style="left:2277px;top:878px"><g stroke="#8a94a3" stroke-width="2" fill="none" stroke-linecap="round" stroke-linejoin="round"><path d="M1 4.500 H21"/><path d="M7 4.500 c0-2.200 1-3.500 4-3.500 s4 1.300 4 3.500"/><path d="M3 4.500 L4.300 20.500 a2.500 2.500 0 0 0 2.500 2.300 H15.200 a2.500 2.500 0 0 0 2.500-2.300 L19 4.500"/></g></svg>
<svg width="28" height="28" viewBox="0 0 28 28" style="left:2214px;top:1004px"><g stroke="#8a94a3" stroke-width="2" fill="none" stroke-linecap="round" stroke-linejoin="round"><path d="M2 26 L4.500 17.500 L19.500 2.500 a2.600 2.600 0 0 1 3.700 0 l1.300 1.300 a2.600 2.600 0 0 1 0 3.700 L9.500 22.500 z"/><path d="M16.800 5.200 L21.800 10.200"/></g></svg>
<svg width="22" height="24" viewBox="0 0 22 24" style="left:2277px;top:1006px"><g stroke="#8a94a3" stroke-width="2" fill="none" stroke-linecap="round" stroke-linejoin="round"><path d="M1 4.500 H21"/><path d="M7 4.500 c0-2.200 1-3.500 4-3.500 s4 1.300 4 3.500"/><path d="M3 4.500 L4.300 20.500 a2.500 2.500 0 0 0 2.500 2.300 H15.200 a2.500 2.500 0 0 0 2.500-2.300 L19 4.500"/></g></svg>
<span class="hl"></span>
<svg width="150" height="70" viewBox="0 0 150 70" style="left:2250px;top:920px"><path d="M11.200 57.100 L52.100 29 L53.500 35.800 L139.500 6.300 L141 9.500 L57.500 43.500 L61 51.200 z" fill="#664bf5"/></svg>
<span id="t68" class="t" style="left:2271.0px;top:1130.0px;font-size:24px;color:#111827;letter-spacing:0.25px;transform:scaleX(1.0360);">1 to 2 of 2</span>
<span id="t69" class="t" style="left:2546.0px;top:1130.0px;font-size:24px;color:#111827;letter-spacing:0.25px;transform:scaleX(0.9668);">Page 1 of 1</span>
<svg width="14" height="18" viewBox="0 0 14 18" style="left:2455px;top:1134px"><g stroke="#cbd0d7" stroke-width="1.600" fill="none" stroke-linecap="round" stroke-linejoin="round"><path d="M1.500 1 V17 M12.500 1.500 L5 9 L12.500 16.500"/></g></svg>
<svg width="7.500" height="13.300" viewBox="0 0 9 16" style="left:2510.800px;top:1136.300px"><g stroke="#cbd0d7" stroke-width="1.600" fill="none" stroke-linecap="round" stroke-linejoin="round"><path d="M8 1 L1.500 8 L8 15"/></g></svg>
<svg width="7.500" height="13.300" viewBox="0 0 9 16" style="left:2696.500px;top:1136.300px"><g stroke="#cbd0d7" stroke-width="1.600" fill="none" stroke-linecap="round" stroke-linejoin="round"><path d="M1 1 L7.500 8 L1 15"/></g></svg>
<svg width="14" height="18" viewBox="0 0 14 18" style="left:2745px;top:1134px"><g stroke="#cbd0d7" stroke-width="1.600" fill="none" stroke-linecap="round" stroke-linejoin="round"><path d="M12.500 1 V17 M1.500 1.500 L9 9 L1.500 16.500"/></g></svg>
</main>
</body></html>
